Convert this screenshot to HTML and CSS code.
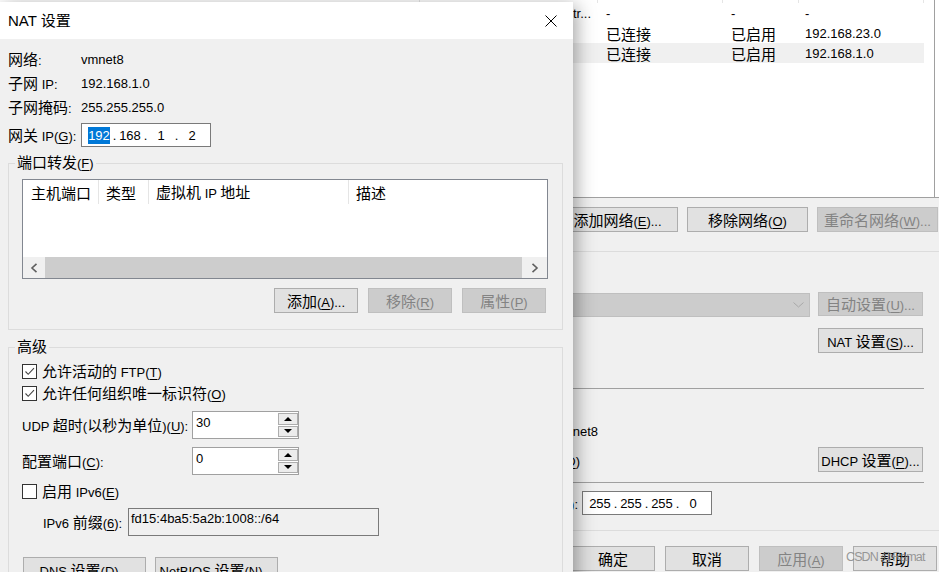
FILE: index.html
```html
<!DOCTYPE html>
<html lang="zh-CN">
<head>
<meta charset="utf-8">
<title>NAT 设置</title>
<link rel="stylesheet" href="styles.css">
</head>
<body>
<div class="mainwin">
  <div class="listarea">
    <div class="netlist">
      <div class="lrow lhead">
        <div class="c c1"></div><div class="c c2"></div><div class="c c3"></div><div class="c c4"></div><div class="c c5"></div>
      </div>
      <div class="lrow">
        <div class="c c1">VMnet0</div><div class="c c2 trunc"><span>Realtek PCIe GbE Family Contr...</span></div><div class="c c3">-</div><div class="c c4">-</div><div class="c c5">-</div>
      </div>
      <div class="lrow">
        <div class="c c1">VMnet1</div><div class="c c2"><span class="h">仅主机</span></div><div class="c c3"><span class="h">已连接</span></div><div class="c c4"><span class="h">已启用</span></div><div class="c c5">192.168.23.0</div>
      </div>
      <div class="lrow sel">
        <div class="c c1">VMnet8</div><div class="c c2"><span>NAT <span class="h">模式</span></span></div><div class="c c3"><span class="h">已连接</span></div><div class="c c4"><span class="h">已启用</span></div><div class="c c5">192.168.1.0</div>
      </div>
    </div>
  </div>

  <div class="netbtns">
    <button class="btn w121"><span><span class="h">添加网络</span>(<u>E</u>)...</span></button>
    <button class="btn w121"><span><span class="h">移除网络</span>(<u>O</u>)</span></button>
    <button class="btn w121 dis"><span><span class="h">重命名网络</span>(<u>W</u>)...</span></button>
  </div>

  <div class="sep light"></div>

  <div class="comborow">
    <div class="combo dis">
      <svg class="chev" width="11" height="6" viewBox="0 0 11 6"><polyline points="0.5,0.5 5.5,5 10.5,0.5" fill="none" stroke="#a8a8a8" stroke-width="1"/></svg>
    </div>
    <button class="btn w105 dis"><span><span class="h">自动设置</span>(<u>U</u>)...</span></button>
  </div>

  <div class="natrow">
    <button class="btn w105"><span>NAT <span class="h">设置</span>(<u>S</u>)...</span></button>
  </div>

  <div class="sep dark short"></div>

  <div class="vmrow"><span><span class="h">主机虚拟适配器名称</span>: VMware <span class="h">网络适配器</span> VMnet8</span></div>

  <div class="dhcprow">
    <span class="dhcptext"><span class="h">使用本地</span> DHCP <span class="h">服务将</span> IP <span class="h">地址分配给虚拟机</span>(<u>D</u>)</span>
    <button class="btn w105"><span>DHCP <span class="h">设置</span>(<u>P</u>)...</span></button>
  </div>

  <div class="sep dark short"></div>

  <div class="maskrow">
    <span class="masklabel"><span class="h">子网掩码</span>(<u>M</u>):</span>
    <div class="ipbox">
      <span class="ipf">255</span><span class="ipd">.</span><span class="ipf">255</span><span class="ipd">.</span><span class="ipf">255</span><span class="ipd">.</span><span class="ipf">0</span>
    </div>
  </div>

  <div class="sep light"></div>

  <div class="okrow">
    <button class="btn w84"><span class="h">确定</span></button>
    <button class="btn w84"><span class="h">取消</span></button>
    <button class="btn w84 dis"><span><span class="h">应用</span>(<u>A</u>)</span></button>
    <button class="btn w84"><span class="h">帮助</span></button>
  </div>
</div>

<div class="watermark">CSDN @Ramat</div>

<div class="dialog">
  <div class="titlebar">
    <span class="title">NAT <span class="h">设置</span></span>
    <svg class="close" width="12" height="12" viewBox="0 0 12 12"><path d="M0.5 0.5 L11.5 11.5 M11.5 0.5 L0.5 11.5" stroke="#000" stroke-width="1" fill="none"/></svg>
  </div>
  <div class="dbody">
    <div class="frow"><span class="flabel"><span class="h">网络</span>:</span><span>vmnet8</span></div>
    <div class="frow"><span class="flabel"><span class="h">子网</span> IP:</span><span>192.168.1.0</span></div>
    <div class="frow"><span class="flabel"><span class="h">子网掩码</span>:</span><span>255.255.255.0</span></div>
    <div class="frow gw"><span class="flabel"><span class="h">网关</span> IP(<u>G</u>):</span>
      <div class="ipbox">
        <span class="ipf"><span class="selt">192</span></span><span class="ipd">.</span><span class="ipf">168</span><span class="ipd">.</span><span class="ipf">1</span><span class="ipd">.</span><span class="ipf">2</span>
      </div>
    </div>

    <fieldset class="grp g1">
      <legend><span class="h">端口转发</span>(<u>F</u>)</legend>
      <div class="gin">
        <div class="lview">
          <div class="lvhead">
            <div class="hc hc1"><span class="h">主机端口</span></div>
            <div class="hc hc2"><span class="h">类型</span></div>
            <div class="hc hc3"><span><span class="h">虚拟机</span> IP <span class="h">地址</span></span></div>
            <div class="hc hc4"><span class="h">描述</span></div>
          </div>
          <div class="lvbody"></div>
          <div class="hscroll">
            <div class="sbtn sl"><svg width="8" height="10" viewBox="0 0 8 10"><polyline points="6.5,0.8 2,5 6.5,9.2" fill="none" stroke="#606060" stroke-width="1.6"/></svg></div>
            <div class="thumb"></div>
            <div class="sbtn sr"><svg width="8" height="10" viewBox="0 0 8 10"><polyline points="1.5,0.8 6,5 1.5,9.2" fill="none" stroke="#606060" stroke-width="1.6"/></svg></div>
          </div>
        </div>
        <div class="pfbtns">
          <button class="btn w84"><span><span class="h">添加</span>(<u>A</u>)...</span></button>
          <button class="btn w84 dis"><span><span class="h">移除</span>(<u>R</u>)</span></button>
          <button class="btn w84 dis"><span><span class="h">属性</span>(<u>P</u>)</span></button>
        </div>
      </div>
    </fieldset>

    <fieldset class="grp g2">
      <legend><span class="h">高级</span></legend>
      <div class="gin">
        <div class="cbrow">
          <span class="cb"><svg width="13" height="13" viewBox="0 0 13 13"><polyline points="2.5,6.5 5.2,9.3 11,3.2" fill="none" stroke="#444" stroke-width="1.1"/></svg></span>
          <span><span class="h">允许活动的</span> FTP(<u>T</u>)</span>
        </div>
        <div class="cbrow">
          <span class="cb"><svg width="13" height="13" viewBox="0 0 13 13"><polyline points="2.5,6.5 5.2,9.3 11,3.2" fill="none" stroke="#444" stroke-width="1.1"/></svg></span>
          <span><span class="h">允许任何组织唯一标识符</span>(<u>O</u>)</span>
        </div>
        <div class="spinrow r1">
          <span class="slabel">UDP <span class="h">超时</span>(<span class="h">以秒为单位</span>)(<u>U</u>):</span>
          <div class="spin">
            <span class="sval">30</span>
            <div class="sbtns"><span class="sb up"></span><span class="sb down"></span></div>
          </div>
        </div>
        <div class="spinrow r2">
          <span class="slabel"><span class="h">配置端口</span>(<u>C</u>):</span>
          <div class="spin">
            <span class="sval">0</span>
            <div class="sbtns"><span class="sb up"></span><span class="sb down"></span></div>
          </div>
        </div>
        <div class="cbrow r3">
          <span class="cb"></span>
          <span><span class="h">启用</span> IPv6(<u>E</u>)</span>
        </div>
        <div class="pfxrow">
          <span class="plabel">IPv6 <span class="h">前缀</span>(<u>6</u>):</span>
          <div class="pfx">fd15:4ba5:5a2b:1008::/64</div>
        </div>
        <div class="advbtns">
          <button class="btn w123"><span>DNS <span class="h">设置</span>(<u>D</u>)...</span></button>
          <button class="btn w123"><span>NetBIOS <span class="h">设置</span>(<u>N</u>)...</span></button>
        </div>
      </div>
    </fieldset>
  </div>
</div>
</body>
</html>
```

FILE: styles.css
```css
* { box-sizing: border-box; }
html, body { margin: 0; padding: 0; }
body {
  width: 939px;
  height: 572px;
  overflow: hidden;
  position: relative;
  background: #f0f0f0;
  font-family: "Liberation Sans", Arial, sans-serif;
  font-size: 13px;
  color: #000;
}
.h {
  font-family: "Noto Sans CJK SC", "Noto Sans CJK JP", sans-serif;
  font-size: 15px;
  line-height: 1;
}
u { text-decoration: underline; text-underline-offset: 2px; text-decoration-thickness: 1px; }

/* generic button */
.btn {
  display: flex;
  align-items: center;
  justify-content: center;
  height: 25px;
  padding: 0;
  margin: 0;
  background: #e1e1e1;
  border: 1px solid #adadad;
  font: inherit;
  color: #000;
  white-space: nowrap;
  line-height: 1;
  flex: none;
}
.btn.dis { background: #cccccc; border-color: #bfbfbf; color: #838383; }
.w121 { width: 121px; }
.w105 { width: 105px; }
.w84 { width: 84px; }
.w123 { width: 123px; }

/* ===== background window ===== */
.mainwin {
  position: absolute;
  inset: 0;
  display: flex;
  flex-direction: column;
  background: #f0f0f0;
}
.listarea {
  height: 198px;
  flex: none;
  display: flex;
  background: #fff;
  border-bottom: 1px solid #a0a0a0;
}
.netlist {
  flex: 1;
  margin-right: 4px;
  border-right: 1px solid #a0a0a0;
  overflow: hidden;
}
.lrow { display: flex; height: 20px; align-items: center; white-space: nowrap; }
.lrow.lhead { height: 22px; margin-top: -19px; }
.lrow.sel .c { background: #f0f0f0; }
.c { height: 100%; display: flex; align-items: center; overflow: hidden; flex: none; }
.lhead .c { border-right: 1px solid #e5e5e5; }
.c1 { width: 420px; padding-left: 8px; }
.c2 { width: 178px; padding-left: 8px; }
.c2.trunc { justify-content: flex-end; padding-right: 7px; padding-left: 0; }
.c2 > span { flex: none; }
.c3 { width: 125px; padding-left: 8px; }
.c4 { width: 76px; padding-left: 8px; }
.c5 { width: 125px; padding-left: 6px; }

.netbtns {
  margin-top: 9px;
  display: flex;
  justify-content: flex-end;
  gap: 9px;
  padding-right: 1px;
}
.sep { flex: none; height: 0; }
.sep.light { border-top: 1px solid #dcdcdc; }
.sep.dark { border-top: 1px solid #a0a0a0; }
.sep.short { margin-right: 15px; }
.netbtns + .sep { margin-top: 19px; }

.comborow {
  margin-top: 41px;
  display: flex;
  justify-content: flex-end;
  gap: 8px;
  padding-right: 16px;
}
.combo {
  width: 400px;
  height: 24px;
  border: 1px solid #bfbfbf;
  background: #cccccc;
  display: flex;
  align-items: center;
  justify-content: flex-end;
  padding-right: 5px;
}
.comborow .btn { height: 24px; margin-top: -1px; }
.natrow {
  margin-top: 11px;
  display: flex;
  justify-content: flex-end;
  padding-right: 16px;
}
.natrow + .sep { margin-top: 35px; }

.vmrow {
  margin-top: 31px;
  height: 20px;
  display: flex;
  align-items: center;
  justify-content: flex-end;
  padding-right: 341px;
  white-space: nowrap;
}
.dhcprow {
  margin-top: 7px;
  height: 25px;
  display: flex;
  align-items: center;
  justify-content: flex-end;
  padding-right: 16px;
  white-space: nowrap;
}
.dhcptext { margin-right: 238px; padding-top: 2px; }
.dhcprow + .sep { margin-top: 10px; }

.maskrow {
  margin-top: 8px;
  display: flex;
  align-items: center;
  justify-content: flex-end;
  padding-right: 227px;
  white-space: nowrap;
}
.masklabel { margin-right: 4px; }
.maskrow + .sep { margin-top: 15px; }

.okrow {
  margin-top: 15px;
  display: flex;
  justify-content: flex-end;
  gap: 10px;
  padding-right: 2px;
}

.watermark {
  position: absolute;
  left: 846px;
  top: 550px;
  font-size: 12.5px;
  letter-spacing: -0.9px;
  color: rgba(135, 135, 135, 0.85);
  white-space: nowrap;
}

/* ip control */
.ipbox {
  width: 130px;
  height: 24px;
  background: #fff;
  border: 1px solid #7a7a7a;
  display: flex;
  align-items: center;
  padding-left: 4px;
  flex: none;
}
.ipf { width: 26px; text-align: center; }
.ipd { width: 5px; text-align: center; }
.selt { display: inline-block; background: #0078d7; color: #fff; line-height: 17px; }

/* ===== dialog ===== */
.dialog {
  position: absolute;
  left: 0;
  top: 2px;
  width: 573px;
  height: 590px;
  background: #f0f0f0;
  box-shadow: 3px 4px 18px rgba(0, 0, 0, 0.38);
}
.titlebar {
  height: 37px;
  background: #fff;
  display: flex;
  align-items: center;
  justify-content: space-between;
  padding: 0 16px 0 8px;
}
.title { font-size: 15px; white-space: nowrap; }
.dbody { padding: 8px 10px 0 8px; }
.frow { display: flex; align-items: center; height: 24px; white-space: nowrap; }
.flabel { width: 73px; flex: none; }
.frow.gw { margin-top: 4px; }

.grp {
  margin: 0;
  padding: 0;
  min-width: 0;
  border: 1px solid #dcdcdc;
}
.grp legend {
  margin-left: 6px;
  padding: 0 2px;
  line-height: 18px;
  height: 18px;
  white-space: nowrap;
}
.g1 { margin-top: 7px; }
.g2 { margin-top: 8px; }
.g1 .gin { padding: 7px 14px 16px 13px; }
.g2 .gin { padding: 4px 14px 20px 13px; }

.lview {
  height: 100px;
  border: 1px solid #828790;
  background: #fff;
  display: flex;
  flex-direction: column;
}
.lvhead { height: 24px; display: flex; flex: none; white-space: nowrap; }
.hc { height: 100%; display: flex; align-items: center; padding-left: 7px; flex: none; }
.hc1 { width: 76px; padding-left: 8px; border-right: 1px solid #e5e5e5; }
.hc2 { width: 50px; border-right: 1px solid #e5e5e5; }
.hc3 { width: 200px; border-right: 1px solid #e5e5e5; }
.hc4 { flex: 1; }
.lvbody { flex: 1; }
.hscroll { height: 21px; display: flex; flex: none; background: #f0f0f0; }
.sbtn { display: flex; align-items: center; justify-content: center; flex: none; }
.sl { width: 22px; }
.sr { width: 25px; }
.thumb { flex: 1; background: #cdcdcd; }

.pfbtns {
  margin-top: 9px;
  display: flex;
  justify-content: flex-end;
  gap: 10px;
  padding-right: 2px;
}

.cbrow { display: flex; align-items: center; height: 22px; gap: 5px; white-space: nowrap; }
.cb {
  width: 15px;
  height: 15px;
  border: 1px solid #333;
  background: #fff;
  display: flex;
  align-items: center;
  justify-content: center;
  flex: none;
}
.spinrow { display: flex; align-items: center; height: 28px; white-space: nowrap; }
.spinrow.r1 { margin-top: 7px; }
.spinrow.r2 { margin-top: 8px; }
.cbrow.r3 { margin-top: 5px; }
.slabel { width: 170px; flex: none; }
.spin {
  width: 107px;
  height: 28px;
  border: 1px solid #a0a0a0;
  background: #fff;
  display: flex;
  flex: none;
}
.sval { flex: 1; padding: 3px 0 0 3px; line-height: 16px; }
.sbtns {
  width: 20px;
  display: flex;
  flex-direction: column;
  gap: 1px;
  padding: 1px 0 1px 0;
}
.sb {
  flex: 1;
  border: 1px solid #adadad;
  background: #ececec;
  display: flex;
  align-items: center;
  justify-content: center;
}
.sb.up::after {
  content: "";
  border-left: 4px solid transparent;
  border-right: 4px solid transparent;
  border-bottom: 4px solid #000;
}
.sb.down::after {
  content: "";
  border-left: 4px solid transparent;
  border-right: 4px solid transparent;
  border-top: 4px solid #000;
}

.pfxrow { margin-top: 6px; display: flex; align-items: center; height: 28px; white-space: nowrap; }
.plabel { width: 85px; padding-left: 21px; box-sizing: content-box; flex: none; }
.pfx {
  width: 251px;
  height: 28px;
  border: 1px solid #7a7a7a;
  background: #f0f0f0;
  padding: 2px 0 0 2px;
  line-height: 16px;
  flex: none;
}
.advbtns { margin-top: 21px; display: flex; gap: 9px; padding-left: 1px; }
```
